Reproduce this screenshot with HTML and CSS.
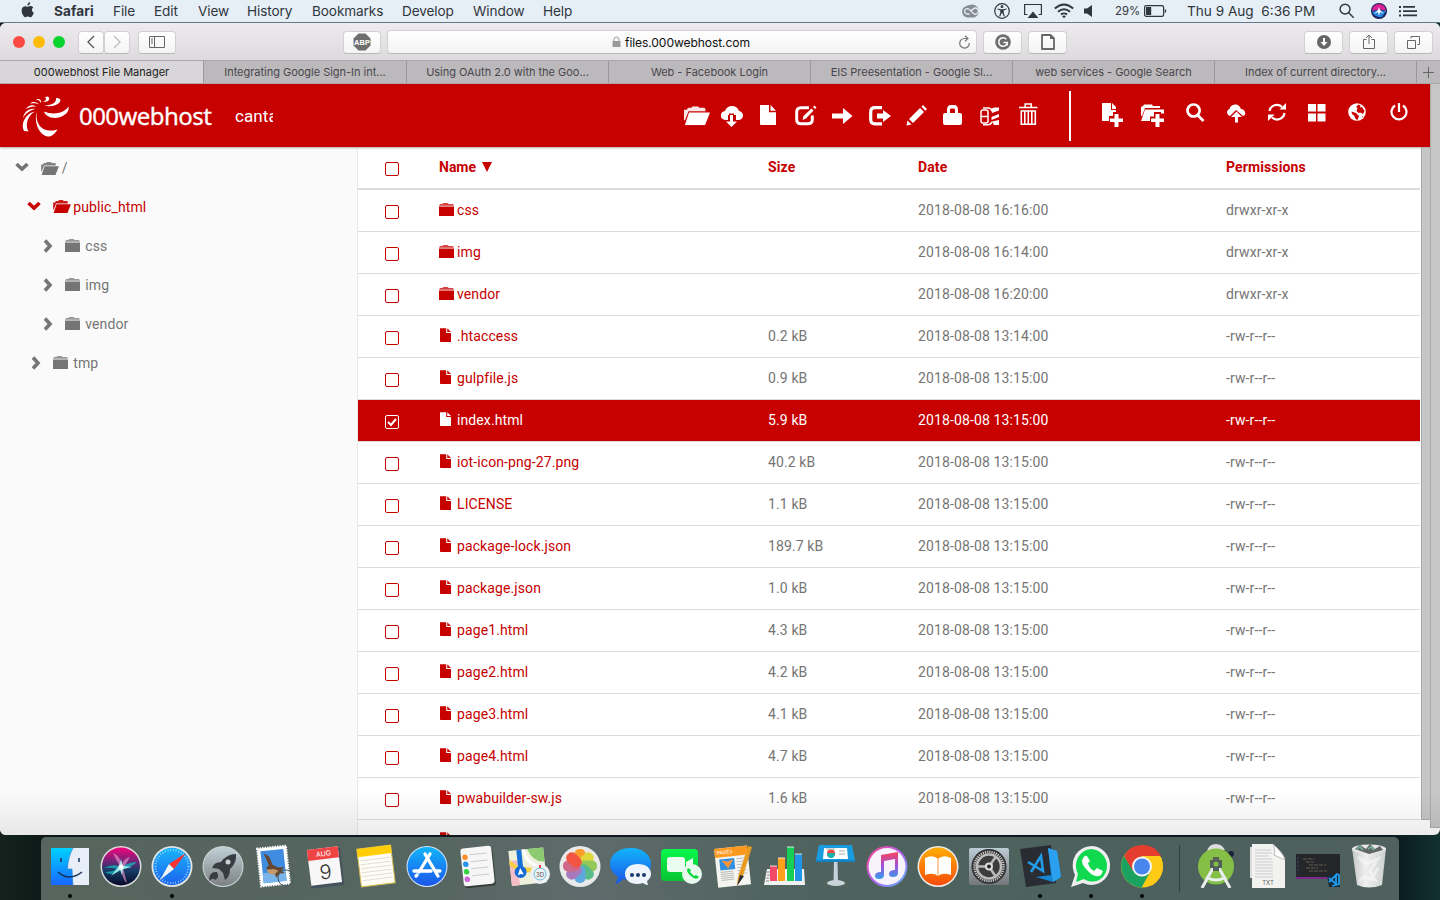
FILE: index.html
```html
<!DOCTYPE html>
<html lang="en">
<head>
<meta charset="utf-8">
<title>000webhost File Manager</title>
<link rel="stylesheet" href="styles.css">
</head>
<body>
<svg class="defs" width="0" height="0">
  <defs>
    <linearGradient id="gFinder" x2="0" y2="1"><stop stop-color="#00d2ff"/><stop offset="1" stop-color="#1767ff"/></linearGradient>
    <linearGradient id="gSafari" x2="0" y2="1"><stop stop-color="#19b5fb"/><stop offset="1" stop-color="#1b62ed"/></linearGradient>
    <linearGradient id="gSiri" x2="0" y2="1"><stop stop-color="#f4047d"/><stop offset=".4" stop-color="#652777"/><stop offset=".6" stop-color="#173c66"/><stop offset="1" stop-color="#080a28"/></linearGradient>
    <linearGradient id="gRocket" x2="0" y2="1"><stop stop-color="#bfd0d5"/><stop offset="1" stop-color="#7d8184"/></linearGradient>
    <linearGradient id="gStore" x2="0" y2="1"><stop stop-color="#12b5fa"/><stop offset="1" stop-color="#1b55e9"/></linearGradient>
    <linearGradient id="gMusic" x2="1" y2="1"><stop stop-color="#ff4385"/><stop offset=".5" stop-color="#b25ff0"/><stop offset="1" stop-color="#58bafb"/></linearGradient>
    <linearGradient id="gNote" x2="0" y2="1"><stop stop-color="#f9415d"/><stop offset=".5" stop-color="#a24fd6"/><stop offset="1" stop-color="#329fef"/></linearGradient>
    <linearGradient id="gBook" x2="0" y2="1"><stop stop-color="#ffae07"/><stop offset="1" stop-color="#f74b08"/></linearGradient>
    <linearGradient id="gGreen" x2="0" y2="1"><stop stop-color="#08f94d"/><stop offset="1" stop-color="#07c330"/></linearGradient>
    <linearGradient id="gSteel" x2="0" y2="1"><stop stop-color="#bccbd4"/><stop offset="1" stop-color="#74777c"/></linearGradient>
    <linearGradient id="gBin" x2="1" y2="0"><stop stop-color="#c4c8c7"/><stop offset=".4" stop-color="#efefef"/><stop offset="1" stop-color="#cdd1cf"/></linearGradient>
  </defs>
  <symbol id="open" viewBox="0 0 26 19"><path d="M0 14V3.500h3q0-2 2-2h2.500l1-1.500H14l1.500 1.500H20q1.500 0 1.500 2V5H4.500L1 14z" opacity=".9"/><path d="M5 6.300h21L21 19H.8z"/></symbol>
  <symbol id="folder" viewBox="0 0 15 13"><path d="M3.500 1Q3.500 0 5 0h3q1.500 0 1.500 1H14l1 1.800H0L1 1z" opacity=".75"/><path d="M0 3.500h15V13H0z"/></symbol>
  <symbol id="file" viewBox="0 0 16 20"><path d="M0 0h9v7.200h7V20H1q-1 0-1-1z"/><path d="M10.500 0 16 5.800h-5.500z"/></symbol>
  <symbol id="down" viewBox="0 0 14 10"><path d="m1.500 2 5.500 5 5.500-5" fill="none" stroke="currentColor" stroke-width="3.600"/></symbol>
  <symbol id="right" viewBox="0 0 10 14"><path d="m2 1.500 5 5.500-5 5.500" fill="none" stroke="currentColor" stroke-width="3.600"/></symbol>
</svg>

<header class="menubar">
  <svg class="apple" width="13" height="16" viewBox="0 0 14 17"><path d="M9.800 0q.1 3.300-2.900 4Q6.800 1 9.800 0M7 5q1.200 0 2.500-.7 2.200-.3 3.700 1.500-3.300 2.600.6 5.800Q12 16 10.300 16.200 9.300 16.300 8.600 15.900q-1.300-.6-2.700 0-1.700.9-3-.7Q0 11.600.7 8 1.400 4.800 4.400 4.500 5.700 4.500 7 5"/></svg>
  <nav class="menus"><b>Safari</b><span>File</span><span>Edit</span><span>View</span><span>History</span><span>Bookmarks</span><span>Develop</span><span>Window</span><span>Help</span></nav>
  <div class="status">
    <svg width="20" height="16" viewBox="0 0 20 16"><path d="M6 14.500A5.800 5.800 0 0 1 5 3.300 7 7 0 0 1 9 2a6.500 6.500 0 1 1 4.500 12.500z" fill="#858c95"/><path d="M8.500 11H6.300a2.700 2.700 0 1 1 1.900-4.600L12.500 10.500a3 3 0 1 0-.2-4.600q-1.200.8-2.800 2.600" fill="none" stroke="#e8eef5" stroke-width="1.300"/></svg>
    <svg width="16" height="16" viewBox="0 0 16 16"><circle cx="8" cy="8" r="7.300" fill="none" stroke="currentColor" stroke-width="1.200"/><circle cx="8" cy="3.700" r="1.400"/><path d="m3.500 5.500 3 .7h3l3-.7v1L9.700 7.600v2l1.200 4H9.800L8.300 10h-.6l-1.500 3.600H5.100l1.200-4v-2L3.500 6.500z"/></svg>
    <svg width="18" height="16" viewBox="0 0 18 16"><path d="M3.500 11.500H.6v-10h16.800v10h-2.900" fill="none" stroke="currentColor" stroke-width="1.200"/><path d="m9 8.500 5.500 6.500h-11z"/></svg>
    <svg width="20" height="16" viewBox="0 0 20 16"><path d="M.8 5.500q9.200-8 18.400 0M4 8.700q6-5 12 0M6.900 11.500q3.100-2.300 6.200 0" fill="none" stroke="currentColor" stroke-width="1.900"/><path d="m8 13 2 2.200 2-2.200q-2-1.200-4 0"/></svg>
    <svg width="9" height="16" viewBox="0 0 9 16"><path d="M0 5.500h3L8 2v12l-5-3.500H0z"/></svg>
    <span class="pct">29%</span>
    <svg width="24" height="16" viewBox="0 0 24 16"><rect x=".6" y="2.600" width="19" height="10.800" rx="1.700" fill="none" stroke="currentColor" stroke-width="1.200"/><path d="M2 4h5.200v8H2zM20.800 6q1.500.3 1.500 2t-1.500 2z"/></svg>
    <span class="clock">Thu 9 Aug&nbsp; 6:36 PM</span>
    <svg width="16" height="16" viewBox="0 0 16 16"><path d="m9.700 9.700 5 5M6 1.200a4.900 4.900 0 1 0 .1 0" fill="none" stroke="currentColor" stroke-width="1.400"/></svg>
    <svg width="16" height="16" viewBox="0 0 16 16"><circle cx="8" cy="8" r="8" fill="#182058"/><path d="M1 8a7 7 0 0 1 14 0q-5-3-14 0" fill="#dc2396"/><path d="M1 9q4-3 14-1l-4 6q-7 1-10-5" fill="#2383dd"/><path d="m8 4 1 3 4 4-4-2-1 4-1-4-4 2 4-4z" fill="#fff"/></svg>
    <svg width="19" height="16" viewBox="0 0 19 16"><path d="M0 3h2v2H0zm4 0h12v1.800H4zM0 7.200h2v2H0zm4 0h14V9H4zM0 11.500h2v2H0zm4 0h14v1.800H4z"/></svg>
  </div>
</header>

<main class="window">
  <div class="toolbar">
    <i class="light red"></i><i class="light amber"></i><i class="light green"></i>
    <div class="pair"><span class="tb half"><svg width="10" height="14" viewBox="0 0 10 14"><path d="M8 1 2 7l6 6" fill="none" stroke="#555" stroke-width="1.300"/></svg></span><span class="tb half"><svg width="10" height="14" viewBox="0 0 10 14"><path d="m2 1 6 6-6 6" fill="none" stroke="#bbb" stroke-width="1.300"/></svg></span></div>
    <span class="tb side"><svg width="16" height="12" viewBox="0 0 16 12"><path d="M.5.500h15v11H.5zm5 0v11M2 3h2M2 5h2M2 7h2" fill="none" stroke="#666"/></svg></span>
    <span class="tb abp"><svg width="18" height="18" viewBox="0 0 18 18"><path d="M5.500.5h7l5 5v7l-5 5h-7l-5-5v-7z" fill="#6e6e6e"/><text x="9" y="11.800" text-anchor="middle" class="abp-text">ABP</text></svg></span>
    <div class="address"><svg class="lock" width="9" height="12" viewBox="0 0 9 12"><path d="M.5 5h8v6h-8z" fill="#999"/><path d="M2 5V3.500a2.500 2.500 0 0 1 5 0V5" fill="none" stroke="#999"/></svg><span>files.000webhost.com</span><svg class="reload" width="13" height="14" viewBox="0 0 13 14"><path d="M9 3.500H6.500A4.800 4.800 0 1 0 11.300 8M7 .7l3 2.800-3 2.700" fill="none" stroke="#777" stroke-width="1.200"/></svg></div>
    <span class="tb"><svg width="16" height="16" viewBox="0 0 16 16"><circle cx="8" cy="8" r="7.800" fill="#6e6e6e"/><path d="M11.300 5.200a4.300 4.300 0 1 0 1 3.300H8.500M12.300 8v3.500" fill="none" stroke="#fff" stroke-width="1.500"/></svg></span>
    <span class="tb second"><svg width="14" height="16" viewBox="0 0 14 16"><path d="M1 1h8.500L13 4.500V15H1z" fill="none" stroke="#666" stroke-width="1.800" stroke-linejoin="round"/><path d="M9 1v4h4" fill="#666"/></svg></span>
    <div class="tools-right">
      <span class="tb"><svg width="14" height="14" viewBox="0 0 14 14"><circle cx="7" cy="7" r="7" fill="#666"/><path d="M6 3h2v4h2.500L7 11 3.500 7H6z" fill="#fff"/></svg></span>
      <span class="tb"><svg width="12" height="16" viewBox="0 0 12 16"><path d="M3.500 5.500h-3v9h11v-9h-3M6 10V1M3 4l3-3 3 3" fill="none" stroke="#666"/></svg></span>
      <span class="tb"><svg width="13" height="13" viewBox="0 0 13 13"><path d="M.5 4.500h8v8h-8zM4 2.500v-2h8.500v8h-2" fill="none" stroke="#666"/></svg></span>
    </div>
  </div>
  <div class="tabs">
    <div class="tab on">000webhost File Manager</div><div class="tab">Integrating Google Sign-In int...</div><div class="tab">Using OAuth 2.0 with the Goo...</div><div class="tab">Web - Facebook Login</div><div class="tab">EIS Preesentation - Google Sl...</div><div class="tab">web services - Google Search</div><div class="tab">Index of current directory...</div><div class="plus"><svg width="11" height="11" viewBox="0 0 11 11"><path d="M5.500 0v11M0 5.500h11" stroke="#666"/></svg></div>
  </div>
  <div class="page">
    <div class="app">
      <div class="appbar">
        <svg class="logo" width="48" height="42" viewBox="0 0 48 42"><path d="M15 15C13 24 17 34 27 34.500 31 35 33.500 34 35.500 33.500 33 38 29 41 26 40.500 18 40 11 27 15 15M22 15.500C30 19 42 18 46.500 10.500 48 17 40 22 33 22 27 22 23 19 22 15.500M13 15.500C4 17-2 28 2 35L6.500 35.500C3 30 5 20 13 15.500M13 13C7 12 2 16 1 22 4 17 7 15 13 13M15 11C11 8 6 9 4 13 8 11 11 10 15 11M17 8.500C15 6 11 5 8 7.500 12 7 14 7 17 8.500M19 7C20 4 17 2 14 3.500 17 4 18 5 19 7M21 5.500C24 5 25 3 23 1L26 .5C29 3 26 7 21 5.500M22 9C28 10 35 7 34 2 38 1.500 40 4 37 7 32 11 26 11 22 9"/></svg>
        <strong class="brand">000webhost</strong><span class="account">cantara</span>
        <div class="icons left">
          <svg width="26" height="24" viewBox="0 0 26 24"><use href="#open" y="3.300" width="26" height="19"/></svg>
          <svg width="22" height="24" viewBox="0 0 22 24"><path d="M7 17H4.500A4.500 4.500 0 0 1 4 8q2-5 7-5 5 0 7 5a4.500 4.500 0 0 1-1 9h-2v-5h-2v-1.500H8V12H7z"/><path d="M9 12h3v6.500h4L10.500 24 5 18.500h4z"/></svg>
          <svg width="16" height="24" viewBox="0 0 16 24"><use href="#file" y="2" width="16" height="20"/></svg>
          <svg width="22" height="24" viewBox="0 0 22 24"><path d="M14 4.700H6Q1.700 4.700 1.700 9v7.500q0 4.300 4.300 4.300h7q4.300 0 4.300-4.300v-4" fill="none" stroke="#fff" stroke-width="3"/><path d="m16.500 5.500 2 2-7.500 8-3.500 1.500 1-4zM18 4l1.500-1.500 2 2L20 6z"/></svg>
          <svg width="21" height="24" viewBox="0 0 21 24"><path d="M0 10.500h11V5l9.500 8-9.500 8v-5.500H0z"/></svg>
          <svg width="22" height="24" viewBox="0 0 22 24"><path d="M13 4.700H6Q1.700 4.700 1.700 9v7.500q0 4.300 4.300 4.300h7" fill="none" stroke="#fff" stroke-width="3.200"/><path d="M8 10.500h6V7l8 6-8 6v-3.500H8z"/></svg>
          <svg width="22" height="24" viewBox="0 0 22 24"><path d="m1.500 17.500 4 4-5 1zM14 5l4 4L7 20l-4-4zM15.500 3.700 17 2l4 4-1.700 1.700z"/></svg>
          <svg width="20" height="24" viewBox="0 0 20 24"><path d="M2 10h2V7q0-5 4-5h3q4 0 4 5v3h2q2 0 2 2v8q0 2-2 2H2q-2 0-2-2v-8q0-2 2-2M7 7v3h5V7q0-1.500-1-1.500H8Q7 5.500 7 7" fill-rule="evenodd"/></svg>
          <svg width="20" height="24" viewBox="0 0 20 24"><path d="M1 9q0-2 2-2h3q2 0 2 2v9q0 2-2 2H3q-2 0-2-2zm0 4.500h7M3 5h5q3 0 4 3M3 21.800h5q3 0 4-3" fill="none" stroke="#fff" stroke-width="1.500"/><path d="m11 6 3-1.500h5v3L12 10zM11.500 14l7.500-3v3l-7.500 3zM12 18.500l7-1.500v5h-5z"/></svg>
          <svg width="20" height="24" viewBox="0 0 20 24"><path d="M0 4.500h18.500M6.200 4V1h6v3M2.300 8h14v13.200h-14zM5.800 8v13M9.300 8v13M12.800 8v13" fill="none" stroke="#fff" stroke-width="1.600"/></svg>
        </div>
        <i class="split"></i>
        <div class="icons right">
          <svg width="22" height="24" viewBox="0 0 22 24"><path d="M0 0h9v7h5v2h-3v4H7v5H0z"/><path d="m10 0 4 4v2h-4zM12.500 11h4v4.500H21v3.500h-4.500v5h-4v-5H8v-3.500h4.500z"/></svg>
          <svg width="24" height="24" viewBox="0 0 24 24"><path d="M0 13V4l2-1 1-1.500h8l1 1.500h7v2H4L1 13zM4 6.500h19v4h-3V9h-7v4.500H9V18H0z"/><path d="M14.500 11h4v4.500H23v3.500h-4.500v5h-4v-5H10v-3.500h4.500z"/></svg>
          <svg width="19" height="24" viewBox="0 0 19 24"><path d="M7.500 1.500a6 6 0 1 0 .1 0M11.500 12l6 6" fill="none" stroke="#fff" stroke-width="2.700"/></svg>
          <svg width="20" height="24" viewBox="0 0 20 24"><path d="m3 13 6-6 7 6q3-1 2-4-1-3-4-3-2-5-6-4.500-5 .5-5.500 4.500Q0 6.500 0 10q1 3 3 3"/><path d="m9.500 8.500 5.500 5.500h-4v5.500H8V14H4z"/></svg>
          <svg width="19" height="24" viewBox="0 0 19 24"><path d="M1.500 8A7.500 7.500 0 0 1 14 4M16.500 10A7.500 7.500 0 0 1 4 14.500" fill="none" stroke="#fff" stroke-width="2.200"/><path d="M18 0v6.500h-6.500zM0 11.500h6.500L0 18z"/></svg>
          <svg width="18" height="24" viewBox="0 0 18 24"><path d="M0 1h8v7.500H0zM9.500 1h8v7.500h-8zM0 10.500h8v8H0zM9.500 10.500h8v8h-8z"/></svg>
          <svg width="19" height="24" viewBox="0 0 19 24"><circle cx="9" cy="9" r="8.800"/><path d="m10.500 1.500 2 1-.5 2 2-.5 2.500 4-1.500 3-2.500-1.500-2 .5-2-2 1-3-1.500-1zM3.500 8.500 8 10l3 3-1.500 4q-2.500-.5-3-4L4 11zM14.500 13l1-1q-.5 2-2 3z" fill="#c70000"/></svg>
          <svg width="18" height="24" viewBox="0 0 18 24"><path d="M5 2.500a7.500 7.500 0 1 0 8 0M9 0v9" fill="none" stroke="#fff" stroke-width="2.200"/></svg>
        </div>
      </div>
      <div class="body">
        <aside class="tree">
          <div class="node l0"><svg class="down" width="14" height="10"><use href="#down"/></svg><svg class="op" width="18" height="13"><use href="#open"/></svg><span class="slash">/</span></div>
          <div class="node l1 active"><svg class="down" width="14" height="10"><use href="#down"/></svg><svg class="op" width="18" height="13"><use href="#open"/></svg><span>public_html</span></div>
          <div class="node l2"><svg class="rt" width="10" height="14"><use href="#right"/></svg><svg class="fd" width="15" height="13"><use href="#folder"/></svg><span>css</span></div>
          <div class="node l2"><svg class="rt" width="10" height="14"><use href="#right"/></svg><svg class="fd" width="15" height="13"><use href="#folder"/></svg><span>img</span></div>
          <div class="node l2"><svg class="rt" width="10" height="14"><use href="#right"/></svg><svg class="fd" width="15" height="13"><use href="#folder"/></svg><span>vendor</span></div>
          <div class="node l1b"><svg class="rt" width="10" height="14"><use href="#right"/></svg><svg class="fd" width="15" height="13"><use href="#folder"/></svg><span>tmp</span></div>
        </aside>
        <section class="list">
          <div class="row head"><i class="box"></i><span class="name">Name <svg width="10" height="10" viewBox="0 0 10 10"><path d="M0 0h10L5 10z"/></svg></span><span>Size</span><span>Date</span><span>Permissions</span></div>
          <div class="row"><i class="box"></i><span class="name"><svg class="dir" width="15" height="13"><use href="#folder"/></svg>css</span><span></span><span>2018-08-08 16:16:00</span><span>drwxr-xr-x</span></div>
          <div class="row"><i class="box"></i><span class="name"><svg class="dir" width="15" height="13"><use href="#folder"/></svg>img</span><span></span><span>2018-08-08 16:14:00</span><span>drwxr-xr-x</span></div>
          <div class="row"><i class="box"></i><span class="name"><svg class="dir" width="15" height="13"><use href="#folder"/></svg>vendor</span><span></span><span>2018-08-08 16:20:00</span><span>drwxr-xr-x</span></div>
          <div class="row"><i class="box"></i><span class="name"><svg class="doc" width="11" height="14"><use href="#file"/></svg>.htaccess</span><span>0.2 kB</span><span>2018-08-08 13:14:00</span><span>-rw-r--r--</span></div>
          <div class="row"><i class="box"></i><span class="name"><svg class="doc" width="11" height="14"><use href="#file"/></svg>gulpfile.js</span><span>0.9 kB</span><span>2018-08-08 13:15:00</span><span>-rw-r--r--</span></div>
          <div class="row selected"><i class="box"><svg width="12" height="12" viewBox="0 0 12 12"><path d="m2 6 3 3 5-6" fill="none" stroke="#fff" stroke-width="2"/></svg></i><span class="name"><svg class="doc" width="11" height="14"><use href="#file"/></svg>index.html</span><span>5.9 kB</span><span>2018-08-08 13:15:00</span><span>-rw-r--r--</span></div>
          <div class="row"><i class="box"></i><span class="name"><svg class="doc" width="11" height="14"><use href="#file"/></svg>iot-icon-png-27.png</span><span>40.2 kB</span><span>2018-08-08 13:15:00</span><span>-rw-r--r--</span></div>
          <div class="row"><i class="box"></i><span class="name"><svg class="doc" width="11" height="14"><use href="#file"/></svg>LICENSE</span><span>1.1 kB</span><span>2018-08-08 13:15:00</span><span>-rw-r--r--</span></div>
          <div class="row"><i class="box"></i><span class="name"><svg class="doc" width="11" height="14"><use href="#file"/></svg>package-lock.json</span><span>189.7 kB</span><span>2018-08-08 13:15:00</span><span>-rw-r--r--</span></div>
          <div class="row"><i class="box"></i><span class="name"><svg class="doc" width="11" height="14"><use href="#file"/></svg>package.json</span><span>1.0 kB</span><span>2018-08-08 13:15:00</span><span>-rw-r--r--</span></div>
          <div class="row"><i class="box"></i><span class="name"><svg class="doc" width="11" height="14"><use href="#file"/></svg>page1.html</span><span>4.3 kB</span><span>2018-08-08 13:15:00</span><span>-rw-r--r--</span></div>
          <div class="row"><i class="box"></i><span class="name"><svg class="doc" width="11" height="14"><use href="#file"/></svg>page2.html</span><span>4.2 kB</span><span>2018-08-08 13:15:00</span><span>-rw-r--r--</span></div>
          <div class="row"><i class="box"></i><span class="name"><svg class="doc" width="11" height="14"><use href="#file"/></svg>page3.html</span><span>4.1 kB</span><span>2018-08-08 13:15:00</span><span>-rw-r--r--</span></div>
          <div class="row"><i class="box"></i><span class="name"><svg class="doc" width="11" height="14"><use href="#file"/></svg>page4.html</span><span>4.7 kB</span><span>2018-08-08 13:15:00</span><span>-rw-r--r--</span></div>
          <div class="row"><i class="box"></i><span class="name"><svg class="doc" width="11" height="14"><use href="#file"/></svg>pwabuilder-sw.js</span><span>1.6 kB</span><span>2018-08-08 13:15:00</span><span>-rw-r--r--</span></div>
          <div class="row last"><i class="box"></i><span class="name"><svg class="doc" width="11" height="14"><use href="#file"/></svg>README.md</span><span>1.3 kB</span><span>2018-08-08 13:15:00</span><span>-rw-r--r--</span></div>
        </section>
        <div class="scroll inner"></div>
      </div>
    </div>
    <div class="scroll outer"></div>
  </div>
</main>

<footer class="dock">
  <div class="cell run"><svg viewBox="0 0 44 44"><path d="M3 4h38v37H3z" fill="url(#gFinder)"/><path d="M25 4q-5 9-5.500 21H24l1 16h16V4z" fill="#e7eef8"/><path d="M25 4q-5 9-5.500 21H24q0 8 1 16" fill="none" stroke="#3b83c8" stroke-width=".7"/><path d="M13 14v4M31 14v4M10 28q11 10 24 0" fill="none" stroke="#163254" stroke-width="1.500"/></svg></div>
  <div class="cell"><svg viewBox="0 0 44 44"><circle cx="22" cy="22.500" r="20.500" fill="#ddd"/><circle cx="22" cy="22.500" r="19" fill="url(#gSiri)"/><path d="M5 24q9-5 17-1 9-5 16-5-5 5-16 8Q12 33 6 28q7 0 12-3-7-2-13-1" fill="#12b9bd" opacity=".75"/><path d="M14 9q8 3 8 13 3-8 9-9-3 6-7 11l4 15q-5-4-6-15-5-8-8-15" fill="#e58ac9" opacity=".7"/><path d="m12 32 8-10 2-7 2 7 9 1-9 2-1 6-2-5z" fill="#baf7f4" opacity=".85"/><circle cx="22" cy="23" r="2.500" fill="#fff"/></svg></div>
  <div class="cell run"><svg viewBox="0 0 44 44"><circle cx="22" cy="22.500" r="20.500" fill="#e5e5e5"/><circle cx="22" cy="22.500" r="18.700" fill="url(#gSafari)"/><circle cx="22" cy="22.500" r="16.500" fill="none" stroke="#b8e8ff" stroke-width="2" stroke-dasharray=".7 2"/><path d="m36 9-12 16-5-5z" fill="#ff3333"/><path d="m10 36 9-16 5 5z" fill="#f4f5f5"/></svg></div>
  <div class="cell"><svg viewBox="0 0 44 44"><circle cx="22" cy="22.500" r="20.500" fill="#ccd6d9"/><circle cx="22" cy="22.500" r="19.500" fill="url(#gRocket)"/><path d="M35 10q1 9-6 15 0 8-5 11l-2-7-4-4-7-1q2-6 9-6 6-8 15-8M16 28q-8-1-8 9 4-4 6-1 5-3 2-8" fill="#373d42"/><circle cx="27" cy="18" r="2.500" fill="#cad1d4"/></svg></div>
  <div class="cell"><svg viewBox="0 0 44 44"><g transform="rotate(-6 22 22)"><path d="M7 3h29v38H7z" fill="#fff" stroke="#fff" stroke-width="2" stroke-dasharray="1.500 1"/><path d="M10 6h23v32H10z" fill="#3f8de0"/><path d="M10 28h23v10H10z" fill="#79b5ea"/><path d="m13 8 5 4 3 9 5 3 6 0-3 3 3 3-5 0-4 4-1-5-5-1-3-5 3-2z" fill="#67462f"/><path d="m14 25 7 0 5 2-5 4-5-2z" fill="#c39b6b"/></g><circle cx="34" cy="34" r="8" fill="none" stroke="#485d62" stroke-width="1"/></svg></div>
  <div class="cell"><svg viewBox="0 0 44 44"><g transform="rotate(-7 22 22)"><path d="M8 6h31v37H6z" fill="#45525c"/><path d="M6 4h31v36H6z" fill="#f7f7f7"/><path d="M6 4h31v11H6z" fill="#f04444"/><text class="aug" x="22" y="12">AUG</text><text class="nine" x="22" y="35">9</text></g></svg></div>
  <div class="cell"><svg viewBox="0 0 44 44"><g transform="rotate(-7 22 22)"><path d="M5 3h34v38H5z" fill="#fffdf3" stroke="#d1bc56"/><path d="M5 3h34v8H5z" fill="#ffce06"/><path d="M7 15h30M7 19h30M7 23h30M7 27h30M7 31h30M7 35h30" stroke="#ddd"/></g></svg></div>
  <div class="cell"><svg viewBox="0 0 44 44"><circle cx="22" cy="22.500" r="20.500" fill="#dceafa"/><circle cx="22" cy="22.500" r="19.500" fill="url(#gStore)"/><path d="m20 10 13 22M25 10 14 28m-5-1h17m5 0h4M12 31l-1 1" fill="none" stroke="#fff" stroke-width="3.300" stroke-linecap="round"/></svg></div>
  <div class="cell"><svg viewBox="0 0 44 44"><g transform="rotate(-6 22 22)"><rect x="7" y="5" width="31" height="38" rx="3" fill="#343d3b"/><rect x="6" y="3" width="31" height="38" rx="3" fill="#f6f6f6"/><path d="M15 10h17M15 17h17M15 24h17M15 31h17" stroke="#ccc"/><circle cx="10" cy="12" r="2.800" fill="#fc8e29"/><circle cx="10" cy="19" r="2.800" fill="#2893ee"/><circle cx="10" cy="26.500" r="2.800" fill="#35d444"/><circle cx="10" cy="34" r="2.800" fill="#cd65d6"/></g></svg></div>
  <div class="cell"><svg viewBox="0 0 44 44"><g transform="rotate(-6 22 22)"><path d="M3 5h35v35H3z" fill="#edf1dc"/><path d="M3 15h8v25H3z" fill="#f4bcc4"/><path d="M3 14l9 8 26 4v5l-26-4-9-7z" fill="#f6cf45"/><path d="M11 5h5v20h-5z" fill="#1670d8"/><path d="M22 5h16v14q-12 0-16-14" fill="#8dcb72"/><path d="M18 5q2 18 20 19" fill="none" stroke="#fff" stroke-width="3"/><circle cx="13" cy="27" r="6" fill="#146bd5"/><path d="m13 23 3 7-3-1-3 1z" fill="#fff"/></g><circle cx="33" cy="30" r="10" fill="#edf1f2"/><circle cx="33" cy="30" r="6" fill="none" stroke="#65bdd7"/><path d="M33 21v3" stroke="#e44" stroke-width="2"/><text class="three" x="33" y="32.500">3D</text></svg></div>
  <div class="cell"><svg viewBox="0 0 44 44"><circle cx="22" cy="22.500" r="20.500" fill="#e9e9e9"/><g opacity=".94"><rect x="16.500" y="5" width="11" height="17" rx="5" fill="#ff981d"/><rect x="16.500" y="5" width="11" height="17" rx="5" fill="#dfd831" transform="rotate(45 22 22)"/><rect x="16.500" y="5" width="11" height="17" rx="5" fill="#8fc64f" transform="rotate(90 22 22)"/><rect x="16.500" y="5" width="11" height="17" rx="5" fill="#4fba84" transform="rotate(135 22 22)"/><rect x="16.500" y="5" width="11" height="17" rx="5" fill="#57a5df" transform="rotate(180 22 22)"/><rect x="16.500" y="5" width="11" height="17" rx="5" fill="#a574bb" transform="rotate(225 22 22)"/><rect x="16.500" y="5" width="11" height="17" rx="5" fill="#cf5e82" transform="rotate(270 22 22)"/><rect x="16.500" y="5" width="11" height="17" rx="5" fill="#f34b38" transform="rotate(315 22 22)"/></g></svg></div>
  <div class="cell"><svg viewBox="0 0 44 44"><path d="M22 4C9 4 1 11 1 20q0 8 8 13-1 4-3 7 5-1 8-5c15 4 28-3 28-15C42 11 34 4 22 4" fill="url(#gStore)"/><path d="M29 20c-8 0-13 4-13 10s5 10 12 10q3 0 6-1 2 2 5 2l-1-4q4-3 4-7c0-6-5-10-13-10" fill="#edf4fb"/><circle cx="23" cy="31" r="2" fill="#193c6a"/><circle cx="29" cy="31" r="2" fill="#193c6a"/><circle cx="35" cy="31" r="2" fill="#193c6a"/></svg></div>
  <div class="cell"><svg viewBox="0 0 44 44"><rect x="1" y="5" width="37" height="32" rx="4" fill="url(#gGreen)"/><rect x="7" y="13" width="18" height="15" rx="3" fill="#eafbf0"/><path d="m26 18 7-4v13l-7-4z" fill="#eafbf0"/><circle cx="32" cy="30" r="10" fill="#e9f8ec"/><path d="M28 24q-3 3 3 8 5 5 8 1l-3-2-2 1-4-4 1-2z" fill="#08d83e"/></svg></div>
  <div class="cell"><svg viewBox="0 0 44 44"><g transform="rotate(-6 22 22)"><path d="M4 3h33v39H4z" fill="#f4f4f1"/><path d="M4 3h33v9H4z" fill="#ff981f"/><path d="M8 14h15v11H8z" fill="#328fe0"/><path d="m10 15 6 2 6-2-6 9z" fill="#ff9636"/><path d="M8 27h13M8 29h13M8 31h13M8 33h13M8 35h13M25 15h9M25 18h9M25 21h9M25 24h9M25 27h9M25 30h9" stroke="#bbb"/><text class="pages" x="14" y="9">PAGES</text></g><path d="m36 2 4 1-10 32-5 6 1-8z" fill="#e99b21"/><path d="m28 31 4 1-7 10z" fill="#282c34"/></svg></div>
  <div class="cell"><svg viewBox="0 0 44 44"><path d="M4 25h37l1 16H1z" fill="#f1f3f2"/><path d="M4 28h3M4 31h3M3 34h3M3 37h3" stroke="#888"/><path d="M7 22h7v15H7z" fill="#f34866"/><path d="M15 14h7v23h-7z" fill="#ffa11b"/><path d="M24 3h7v34h-7z" fill="#17cf55"/><path d="M32 10h7v27h-7z" fill="#2194e6"/><path d="M7 22h7M15 14h7M24 3h7M32 10h7" stroke="#ffffff66" stroke-width="2"/></svg></div>
  <div class="cell"><svg viewBox="0 0 44 44"><path d="M5 1h33l3 15H2z" fill="#199cdf"/><path d="M2 16h39v2H2z" fill="#1483c3"/><path d="M10 4h23l1 11H9z" fill="#fff"/><circle cx="17" cy="9.500" r="4" fill="#f34545"/><path d="M13 9h8q0 5-4 5t-4-5" fill="#16b4a9"/><path d="M25 7h6M25 10h6M12 5h9" stroke="#aaa"/><path d="M20 18h3.500l.5 20h-4.500z" fill="#c3d2dd"/><ellipse cx="22" cy="39" rx="9" ry="3" fill="#c9d4da"/></svg></div>
  <div class="cell"><svg viewBox="0 0 44 44"><circle cx="22" cy="22.500" r="20.500" fill="url(#gMusic)"/><circle cx="22" cy="22.500" r="18.500" fill="#f7f2fb"/><path d="M16 11 33 8v21q0 4-5 4-4 0-4-3 0-4 6-4V15l-11 2v14q0 4-5 4-4 0-4-3 0-4 6-4z" fill="url(#gNote)"/></svg></div>
  <div class="cell"><svg viewBox="0 0 44 44"><circle cx="22" cy="22.500" r="20.500" fill="#eee"/><circle cx="22" cy="22.500" r="19" fill="url(#gBook)"/><path d="M9 14q8-4 13 1 5-5 13-1v17q-8-3-13 1-5-4-13-1z" fill="#fff"/><path d="M22 15v17" stroke="#f69544"/></svg></div>
  <div class="cell"><svg viewBox="0 0 44 44"><rect x="2" y="4" width="40" height="37" rx="2" fill="url(#gSteel)"/><circle cx="22" cy="22.500" r="17.500" fill="#333"/><circle cx="22" cy="22.500" r="14.500" fill="none" stroke="#ccc" stroke-width="2.500" stroke-dasharray="1.200 1"/><circle cx="22" cy="22.500" r="12" fill="#3c3c3c" stroke="#bbb" stroke-width="2.500"/><path d="M10 22.500h12l7-10M22 22.500l6 9" fill="none" stroke="#bbb" stroke-width="2.500"/><circle cx="22" cy="22.500" r="4" fill="#ddd"/><circle cx="22" cy="22.500" r="2" fill="#222"/></svg></div>
  <div class="cell run"><svg viewBox="0 0 44 44"><path d="m2 5 31-4 5 38-30 4z" fill="#292d33"/><path d="m30 4 9 3 4 26-8 5-17-5 15-2z" fill="#1786d2"/><path d="m30 4 9 3 4 26-8 5z" fill="#2aa0ef"/><path d="m10 18 15 9-2-15-10 16" fill="none" stroke="#249be8" stroke-width="2.600"/></svg></div>
  <div class="cell run"><svg viewBox="0 0 44 44"><path d="M23 2a19 19 0 0 1 18 20c0 14-14 23-27 17L2 43l4-12C-1 16 9 2 23 2" fill="#eee"/><path d="M23 5a17 17 0 0 1 15 17c0 12-12 20-23 13l-8 3 2-8C3 17 12 5 23 5" fill="#10d84f"/><path d="M14 14q-3 5 4 12 8 9 14 5l2-4-6-3-3 3q-5-3-6-8l2-2-3-5q-2-1-4 2" fill="#fff"/></svg></div>
  <div class="cell run"><svg viewBox="0 0 44 44"><circle cx="22" cy="22.500" r="21" fill="#fdcb16"/><path d="M4 12a21 21 0 0 1 37 0H22l-9 16z" fill="#e43c2e"/><path d="M4 12 13 27h18l-9 16.500A21 21 0 0 1 4 12" fill="#1ba160"/><path d="M22 13h19q6 17-8 28l-11 2 9-17z" fill="#fdcb16"/><circle cx="22" cy="22.500" r="10" fill="#f2f5f7"/><circle cx="22" cy="22.500" r="8" fill="#4885ed"/></svg></div>
  <i class="divider"></i>
  <div class="cell"><svg viewBox="0 0 44 44"><path d="M13 7q2-7 9-7 6 0 9 6" fill="#ddd"/><circle cx="37" cy="10" r="3" fill="#1d2439"/><circle cx="22" cy="22.500" r="18" fill="#86bf46"/><path d="m19 24-11 20M25 24l11 20M12 33q10 6 20 0" fill="none" stroke="#e9eeee" stroke-width="3"/><path d="M19 13h6v3h3v8h-3v3h-6v-3h-3v-8h3z" fill="#53605a"/><circle cx="22" cy="20" r="2.500" fill="#86bf46"/></svg></div>
  <div class="cell"><svg viewBox="0 0 44 44"><path d="M5 3h24l3 3v28H5z" fill="#ddd"/><path d="M7 0h21l12 15v29H7z" fill="#f2f2f1"/><path d="M10 6h16M10 9h17M10 12h14M10 15h17M10 18h18M10 21h18M10 24h18M10 27h18M10 30h18M10 33h18" stroke="#ccc"/><path d="M28 0q3 7 1 11l11 5Q39 10 28 0" fill="#fff" stroke="#bbb"/><text class="txt" x="23" y="41">TXT</text></svg></div>
  <div class="cell"><svg viewBox="0 0 44 44"><path d="M0 10h44v25H0z" fill="#252629"/><path d="M0 33h32v2H0z" fill="#792b8b"/><path d="M7 15h11M10 18h8M13 21h17M10 24h12M13 27h18" stroke="#675c50" stroke-dasharray="4 1"/><path d="M2 13v17" stroke="#447" stroke-dasharray="2"/><path d="m31 31 11-2 2 14H33z" fill="#172837"/><path d="m33 34 7 6v-9l-7 7M40 30l3 1v9l-7 2" fill="none" stroke="#239bec" stroke-width="1.800"/></svg></div>
  <div class="cell"><svg viewBox="0 0 44 44"><path d="M5 4h34l-4 37q-13 5-25 0z" fill="url(#gBin)"/><ellipse cx="22" cy="5" rx="17" ry="4.500" fill="#e5e5e5"/><path d="m8 5 5-4 6 4 4-5 5 5 5-3 3 4-14 4z" fill="#606665"/><path d="m10 5 3-2 3 3M21 5l3-2 3 3" fill="none" stroke="#6fb998" stroke-width="1.500"/><path d="m11 13 8 7 12-5-8 12 5 9-11-3-5 4M31 24l-6 10" fill="none" stroke="#fff" opacity=".45" stroke-width="3"/></svg></div>
</footer>
</body>
</html>
```
FILE: styles.css
```css
* { box-sizing: border-box; }
body { margin: 0; width: 1440px; height: 900px; overflow: hidden; display: flex; flex-direction: column; font-family: Inter, "Liberation Sans", sans-serif; background: linear-gradient(90deg, #14231c, #0b1718 4%, #101820 50%, #0b1c20 97%, #11302e); }
svg { display: block; flex: none; fill: currentColor; }
.defs { position: absolute; }
.menubar { height: 23px; flex: none; display: flex; align-items: center; padding: 0 22px 1px 21px; background: #e6eef6; border-bottom: 1px solid #65788a; color: #30363d; font-size: 13.6px; }
.apple { margin-top: -2px; }
.menus { display: grid; grid-template-columns: 59px 41px 44px 49px 65px 90px 71px 70px 40px; margin-left: 20px; letter-spacing: -.1px; }
.menus b { font-weight: 700; letter-spacing: .1px; }
.status { margin-left: auto; display: flex; align-items: center; white-space: nowrap; }
.status svg:nth-child(1) { margin-right: 13px; }
.status svg:nth-child(2) { margin-right: 14px; }
.status svg:nth-child(3) { margin-right: 12px; }
.status svg:nth-child(4) { margin-right: 10px; }
.status svg:nth-child(5) { margin-right: 22px; }
.pct { width: 29px; font-size: 11.3px; }
.clock { width: 132px; margin-left: 19px; margin-right: 20px; font-size: 13.6px; }
.status svg:nth-child(9) { margin-right: 16px; }
.status svg:nth-child(10) { margin-right: 12px; }

.window { height: 812px; flex: none; display: flex; flex-direction: column; border-radius: 6px; overflow: hidden; background: #fff; }
.toolbar { height: 37px; flex: none; display: flex; align-items: center; padding: 1px 7px 0 13px; background: linear-gradient(#edebed, #dcdadc); }
.light { width: 12px; height: 12px; border-radius: 50%; margin-right: 8px; }
.red { background: #fc4a43; }
.amber { background: #febc08; }
.green { background: #08d32f; }
.tb { width: 37px; height: 23px; border-radius: 4px; display: flex; align-items: center; justify-content: center; background: linear-gradient(#fff, #f4f4f4); border: 1px solid #d2d0d2; border-bottom-color: #b9b7b9; }
.pair { display: flex; gap: 0; margin-left: 5px; }
.half { width: 26px; }
.side { width: 38px; margin-left: 8px; }
.abp { width: 38px; margin-left: 167px; }
.abp-text { font: bold 7.500px "Liberation Sans", sans-serif; fill: #fff; }
.address { width: 590px; height: 24px; margin: 0 6px 0 6px; padding: 0 5px 0 224px; display: flex; align-items: center; gap: 4px; background: linear-gradient(#fff, #f3f3f3); border: 1px solid #d1cfd1; border-bottom-color: #b9b7b9; border-radius: 4px; font-size: 12.1px; letter-spacing: -.1px; color: #111; }
.reload { margin-left: auto; }
.address + .tb { width: 39px; }
.second { margin-left: 6px; width: 39px; }
.tools-right { margin-left: auto; display: flex; gap: 6px; }
.tools-right .tb { width: 39px; }
.tabs { height: 24px; flex: none; display: grid; grid-template-columns: 203px 203px 202px 202px 202px 202px 202px 24px; border-top: 1px solid #aba9ab; border-bottom: 1px solid #aaa8aa; background: #bcb9bc; }
.tab, .plus { display: flex; align-items: center; justify-content: center; font-size: 11px; letter-spacing: -.02px; color: #48464a; white-space: nowrap; border-left: 1px solid #999699; }
.tab.on { background: #d8d6d8; color: #222; border: 0; }
.page { flex: 1; min-height: 0; display: flex; position: relative; }
.page::after { content: ""; position: absolute; inset: auto 0 0 0; height: 43px; background: linear-gradient(transparent, rgba(0,0,0,.075)); pointer-events: none; }
.app { width: 1430px; display: flex; flex-direction: column; font-family: Roboto, sans-serif; }
.appbar { height: 63px; flex: none; display: flex; align-items: flex-start; background: #c70000; color: #fff; padding-left: 22px; box-shadow: 0 1px 2px #aaa; z-index: 1; }
.logo { margin-top: 12px; }
.brand { font: 400 24px/32px "Noto Sans", sans-serif; letter-spacing: -.55px; width: 155px; margin: 16px 0 0 9px; -webkit-text-stroke: .3px #fff; }
.account { font-size: 17px; line-height: 24px; letter-spacing: .1px; width: 38px; overflow: hidden; margin: 20px 1px 0 1px; }
.icons { display: grid; margin-top: 19px; }
.icons.left { margin-left: 410px; grid-template-columns: 37px 39px 35px 37px 37px 37px 37px 37px 39px 18px; }
.split { width: 2px; height: 50px; margin: 7px 31px 0 32px; background: #fff; }
.icons.right { grid-template-columns: 39px 45px 41px 41px 40px 40px 42px 18px; }
.body { flex: 1; min-height: 0; display: flex; }
.tree { width: 358px; background: #fafafa; border-right: 1px solid #e8e8e8; color: #757575; font-size: 14px; }
.node { height: 39px; display: flex; align-items: center; letter-spacing: .1px; }
.l0 { padding: 2px 0 0 15px; height: 40px; }
.l1 { padding-left: 27px; }
.l1b { padding-left: 31px; }
.l2 { padding-left: 43px; }
.node .down { margin-top: -2px; }
.active { color: #c70000; }
.op { margin-left: 12px; margin-right: 2.3px; }
.slash { margin-left: .500px; }
.fd { margin: -1px 5.300px 0 12px; }
.list { width: 1062px; padding-top: 1px; overflow: hidden; }
.row { height: 42px; display: grid; grid-template-columns: 54px 329px 150px 308px 194px; align-items: center; padding: 0 0 1px 27px; border-bottom: 1px solid #dcdcdc; color: #757575; font-size: 14px; letter-spacing: .12px; }
.row .name { display: flex; align-items: center; color: #c70000; letter-spacing: .1px; }
.row.head { color: #c70000; font-weight: 700; border-bottom-width: 2px; padding-bottom: 2px; }
.head .name { gap: 6px; letter-spacing: 0; }
.box { width: 14px; height: 14px; border: 1px solid #c70000; border-radius: 2px; margin-top: 4px; background: #fff; }
.dir { margin-right: 3px; margin-top: -1px; }
.doc { margin: -2px 6px 0 1px; }
.row.selected, .selected .name { background: #c70000; color: #fff; }
.selected .box { background: #c70000; border-color: #fff; }
.row.last > span { padding-top: 3px; }
.row.last .doc { margin-top: -5px; }
.scroll { background: #c6c6c6; border-left: 1px solid #aaa; }
.inner { width: 9px; height: 673px; margin-left: 1px; border-bottom: 1px solid #aaa; }
.outer { width: 10px; height: 744px; border-bottom: 1px solid #aaa; }

.dock { width: 1358px; height: 63px; margin: 2px 0 0 41px; display: flex; padding: 7px 0 0 3px; background: linear-gradient(90deg, #56655e, #55655f 28%, #5e6b6c 40%, #50635e 55%, #4c615d 80%, #4f605d); border-radius: 5px 5px 0 0; }
.cell { width: 51.08px; display: flex; flex-direction: column; align-items: center; flex: none; }
.cell svg { width: 44px; height: 44px; }
.run::after { content: ""; width: 4px; height: 4px; border-radius: 50%; background: #000; margin-top: 6px; }
.divider { width: 1px; height: 47px; margin: 1px 11px; background: #2f403e; }
.aug, .nine, .three, .pages, .txt { font: 7px Inter, sans-serif; text-anchor: middle; fill: #fff; }
.nine { font-size: 20px; font-weight: 300; fill: #333; }
.three { font-size: 6px; fill: #555; }
.pages { font-size: 5px; }
.txt { font-size: 6px; fill: #666; }
```
